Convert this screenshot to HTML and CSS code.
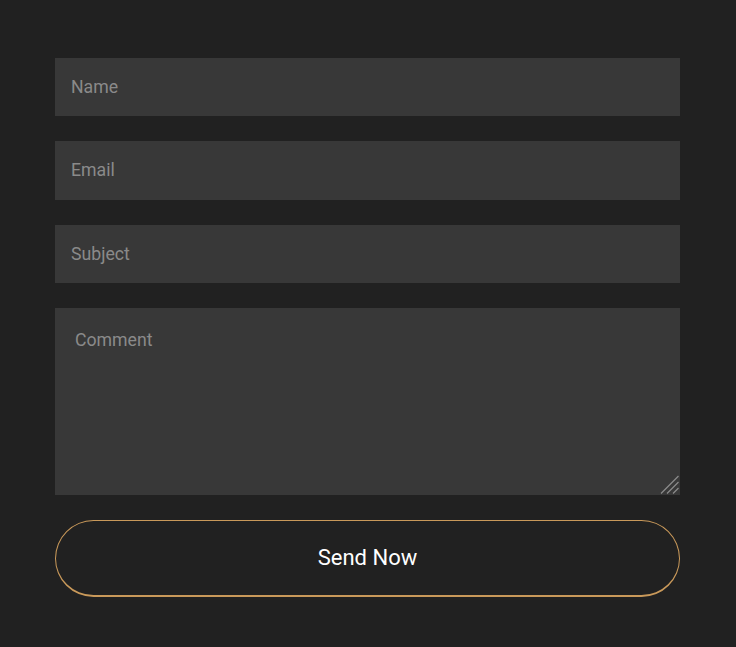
FILE: index.html
```html
<!DOCTYPE html>
<html lang="en">
<head>
  <meta charset="UTF-8">
  <meta name="viewport" content="width=device-width, initial-scale=1.0">
  <title>Contact</title>
  <link rel="stylesheet" href="styles.css">
</head>
<body>
  <form class="contact-form">
    <input type="text" placeholder="Name">
    <input type="email" placeholder="Email">
    <input type="text" placeholder="Subject">
    <div class="comment-field">
      <textarea placeholder="Comment"></textarea>
      <svg class="grip" width="20" height="20" viewBox="0 0 20 20">
        <path d="M2 19.5 L19.5 2 M8 19.5 L19.5 8 M14 19.5 L19.5 14" stroke="#8c8c8c" stroke-width="1.2" fill="none"/>
      </svg>
    </div>
    <button type="submit">Send Now</button>
  </form>
</body>
</html>
```

FILE: styles.css
```css
body {
  margin: 0;
  padding: 58px 56px 0 55px;
  background-color: #212121;
  font-family: Roboto, "Liberation Sans", sans-serif;
}
.contact-form {
  display: flex;
  flex-direction: column;
  gap: 25px;
}
input,
textarea {
  box-sizing: border-box;
  width: 100%;
  border: none;
  outline: none;
  background-color: #383838;
  color: #ddd;
  font-family: inherit;
  font-size: 17.7px;
  margin: 0;
}
input {
  height: 58.33px;
  padding: 0 16px;
}
.comment-field {
  position: relative;
}
textarea {
  display: block;
  height: 187px;
  padding: 22px 20px;
  resize: none;
}
.grip {
  position: absolute;
  right: 1px;
  bottom: 1px;
}
::placeholder {
  color: #8a8a8a;
}
button {
  height: 77px;
  margin: 0;
  background-color: transparent;
  color: #fff;
  border: 1px solid #c9995a;
  border-bottom-width: 2px;
  border-radius: 40px;
  font-family: inherit;
  font-size: 22px;
  cursor: pointer;
}
```
